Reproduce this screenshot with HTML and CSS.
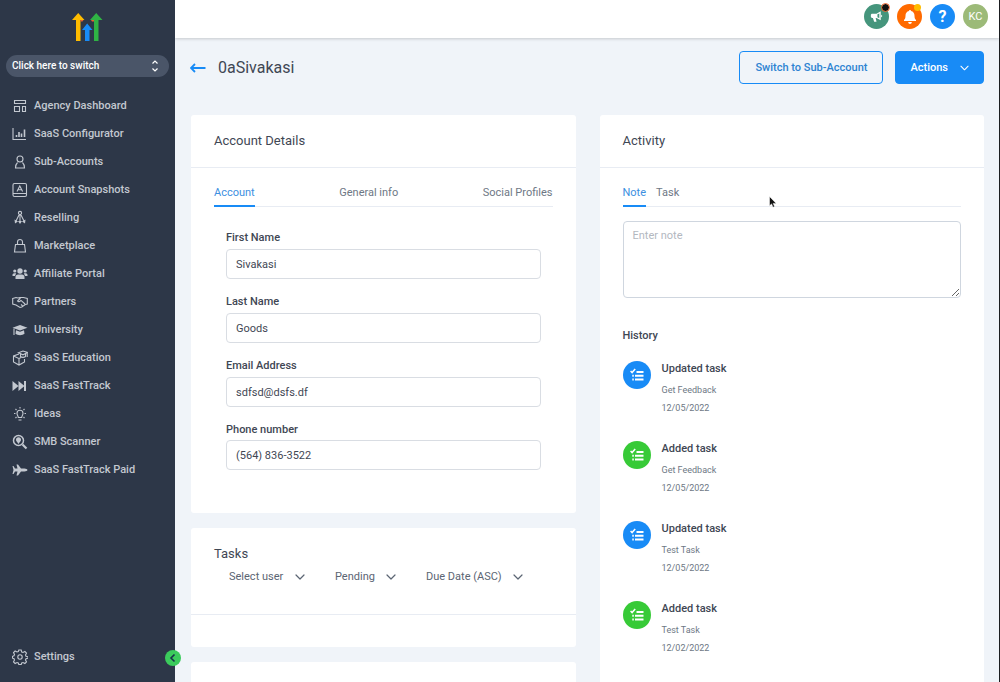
FILE: index.html
```html
<!DOCTYPE html>
<html lang="en">
<head>
  <meta charset="UTF-8">
  <meta name="viewport" content="width=device-width, initial-scale=1.0">
  <title>Account Details</title>
  <link rel="stylesheet" href="styles.css">
</head>
<body>

<!-- Shared icons -->
<svg class="defs" width="0" height="0" aria-hidden="true">
  <symbol id="chevron" viewBox="0 0 10 6"><path d="M1 1l4 4 4-4" fill="none" stroke="currentColor" stroke-width="1.2" stroke-linecap="round" stroke-linejoin="round"/></symbol>
  <symbol id="tasks" viewBox="0 0 14 14">
    <path d="M.6 3l1.500 1.600L5.200 1" fill="none" stroke="currentColor" stroke-width="1.500"/>
    <path d="M6.500 3h7v2h-7zM5 6.700h8.500v2H5zM5 10.400h8.500v2H5zM2.300 6.700h1.500v2H2.300zM2.300 10.400h1.500v2H2.300z" fill="currentColor"/>
  </symbol>
</svg>

<div class="app">
  <aside class="sidebar">
    <svg class="logo" viewBox="0 0 32 30" width="32" height="30">
      <path d="M4 29V8H0l6.200-7 6.300 7H8.500v21z" fill="#ffbc00"/>
      <path d="M22 29V8h-4l6.200-7 6.300 7h-4v21z" fill="#2fb344"/>
      <path d="M13 29V18h-3l5.200-6.500 5.300 6.500h-3v11z" fill="#188bf6"/>
      <path d="M8.500 8h3l-1 1.500h-2zM19 8h3v1.500h-2z" fill="#e8632d"/>
    </svg>

    <button class="switcher">
      <span>Click here to switch</span>
      <svg viewBox="0 0 8 12" width="8" height="12"><path d="M1.500 3.500L4 1l2.500 2.500M1.500 8.500L4 11l2.500-2.500" fill="none" stroke="currentColor" stroke-width="1.200"/></svg>
    </button>

    <nav class="nav">
      <a href="#"><svg viewBox="0 0 16 16"><path d="M2.500 2.500h11v3h-11zM2.500 8.500h5v5h-5zM10.500 8.500h3v5h-3z"/></svg>Agency Dashboard</a>
      <a href="#"><svg viewBox="0 0 16 16"><path d="M1 2v11.500h13"/><path d="M4.500 11V9M7 11V6M9.500 11V7.500M12.500 11V3.500" stroke-width="1.600"/></svg>SaaS Configurator</a>
      <a href="#"><svg viewBox="0 0 16 16"><circle cx="8" cy="5" r="3"/><path d="M5.500 8.500C4.500 9.500 3.500 11 3.500 14h9c0-3-1-4.500-2-5.500"/></svg>Sub-Accounts</a>
      <a href="#"><svg viewBox="0 0 16 16"><rect x="1" y="1.500" width="13.500" height="13" rx="1.500"/><path d="M1 11.500h13.500M5 9.500l2.800-5.500 2.800 5.500M6 7.800h3.600"/></svg>Account Snapshots</a>
      <a href="#"><svg viewBox="0 0 16 16"><circle cx="8" cy="3" r="1.600"/><path d="M8 4.500V12M7 5L4 11M9 5l3 6"/><path class="solid" d="M8 14l-2-3h4zM3 13.500l-.5-4 3.500 2zM13 13.500l.5-4-3.500 2z"/></svg>Reselling</a>
      <a href="#"><svg viewBox="0 0 16 16"><path d="M3.500 6.500h9l1 7.500h-11zM5.500 6.500V4a2.500 2.500 0 0 1 5 0v2.500"/></svg>Marketplace</a>
      <a href="#"><svg viewBox="0 0 16 16"><g class="solid"><circle cx="8" cy="5" r="2.700"/><circle cx="2.800" cy="5" r="1.600"/><circle cx="13.200" cy="5" r="1.600"/><path d="M3.500 13v-2c0-1.500 1.200-2.500 2.500-2.500h4c1.300 0 2.500 1 2.500 2.500v2zM.5 10V9c0-1 .8-1.700 1.700-1.700h2L3 10zM15.500 10V9c0-1-.8-1.700-1.700-1.700h-2L13 10z"/></g></svg>Affiliate Portal</a>
      <a href="#"><svg viewBox="0 0 16 16"><path d="M.7 4.500L4 3.500l2 .5 2-.5 3.500 0 3.800 1v5.500l-2 .5-3.500 2.500-1.800.5L4 11 .7 10zM8.500 4L5.500 7c1 1.200 2.300.6 3.500-.6L13 10M9 10.500l1.500 1.200"/></svg>Partners</a>
      <a href="#"><svg viewBox="0 0 16 16"><path class="solid" d="M8 3l7.500 2.700L8 8.500.5 5.700z"/><path class="solid" d="M4 8.300l4 1.500 4-1.500.5 3.500c-2 1.800-7 1.800-9 0z"/><path d="M2 6.500V13"/></svg>University</a>
      <a href="#"><svg viewBox="0 0 16 16"><path d="M7 4L1.500 6v6L7 15l5.500-3V9M1.500 6L7 8.500V15M7 8.500L9 7.500M6.500 2.800l4.500-1.800 4.500 1.500L11 4.800zM8.500 4v2.500c1.500 1 3.500 1 5 0V3.500M15.200 3v4"/></svg>SaaS Education</a>
      <a href="#"><svg viewBox="0 0 16 16"><path class="solid" d="M.5 3l6 5-6 5zM6.500 3l6 5-6 5zM12 3h2v10h-2z"/></svg>SaaS FastTrack</a>
      <a href="#"><svg viewBox="0 0 16 16"><path d="M6.300 11.500C6.300 10 5 9.300 5 7.300a3 3 0 0 1 6 0c0 2-1.300 2.700-1.300 4.200zM6.500 14h3M8 1v1.500M2 7.500h1.500M12.500 7.500H14M3.500 3l1 1M12.500 3l-1 1M3.500 12l1-1M12.500 12l-1-1"/></svg>Ideas</a>
      <a href="#"><svg viewBox="0 0 16 16"><circle cx="6.500" cy="6.500" r="5" stroke-width="1.500"/><path d="M10.500 10.500L14.500 14.500" stroke-width="2.200"/><path class="solid" d="M6.500 10C5 8 4 7 4 5.800a2.500 2.500 0 0 1 5 0C9 7 8 8 6.500 10z"/></svg>SMB Scanner</a>
      <a href="#"><svg viewBox="0 0 16 16"><path class="solid" d="M.5 4h1l1.500 2.500h2.500L4.500 2.500H6l3 4h3.500c1.500 0 3 .8 3 1.500s-1.500 1.500-3 1.500H9l-3 4H4.500l1-4H3L1.500 12h-1L1.500 8z"/></svg>SaaS FastTrack Paid</a>
    </nav>

    <nav class="nav nav-bottom">
      <a href="#"><svg viewBox="0 0 16 16"><circle cx="8" cy="8" r="2.200"/><path d="M6.800 1h2.400l.5 2 1.300.5 1.900-1 1.600 1.600-1 1.900.5 1.300 2 .5v1.400l-2 .5-.5 1.300 1 1.900-1.600 1.600-1.900-1-1.300.5-.5 1.500H6.800l-.5-1.500-1.300-.5-1.900 1-1.600-1.600 1-1.900-.5-1.300-1.500-.5V7.300l1.500-.5.500-1.300-1-1.900 1.600-1.600 1.900 1 1.300-.5z"/></svg>Settings</a>
    </nav>

    <button class="collapse" aria-label="Collapse sidebar">
      <svg viewBox="0 0 10 10" width="10" height="10"><path d="M6.500 1.500L3 5l3.500 3.500" fill="none" stroke="currentColor" stroke-width="1.600"/></svg>
    </button>
  </aside>

  <div class="main">
    <header class="topbar">
      <button class="round teal" aria-label="Announcements">
        <svg viewBox="0 0 16 16" width="15" height="15"><path d="M12.500 2.500v9.500L8 9.500H3.500c-1 0-1.500-.7-1.500-1.500V6.500C2 5.700 2.500 5 3.500 5H8z" fill="#fff"/><path d="M9 5.700l2-1v5.200l-2-1z" fill="#45957c"/><path d="M4 9h3l1 4.500H5.500zM13 6c1.500.3 1.500 2.500 0 2.800z" fill="#fff"/></svg>
        <span class="dot dark"></span>
      </button>
      <button class="round orange" aria-label="Notifications">
        <svg viewBox="0 0 16 16" width="16" height="16"><path d="M8 1c.7 0 1 .5 1 1.100 2.300.5 3.500 2.300 3.500 4.700 0 2.400.6 3.300 1.500 4.200v1H2v-1c.9-.9 1.500-1.800 1.500-4.200C3.500 4.400 4.700 2.600 7 2.100 7 1.500 7.300 1 8 1zM6.200 13h3.600c0 1.200-.8 2-1.800 2s-1.800-.8-1.800-2z" fill="#fff"/></svg>
        <span class="dot yellow"></span>
      </button>
      <button class="round blue" aria-label="Help">?</button>
      <button class="round avatar">KC</button>
    </header>

    <div class="page-head">
      <a href="#" class="back" aria-label="Back">
        <svg viewBox="0 0 16 10" width="16" height="10"><path d="M15.500 5H1.500M5 1L1 5l4 4" fill="none" stroke="currentColor" stroke-width="1.800"/></svg>
      </a>
      <h1>0aSivakasi</h1>
      <button class="btn btn-outline">Switch to Sub-Account</button>
      <button class="btn btn-primary">Actions <svg width="9" height="6"><use href="#chevron"/></svg></button>
    </div>

    <div class="columns">
      <div class="column">
        <section class="card details">
          <h2 class="card-title">Account Details</h2>
          <div class="tabs spread">
            <button class="tab active">Account</button>
            <button class="tab">General info</button>
            <button class="tab">Social Profiles</button>
          </div>
          <form class="fields">
            <div class="field">
              <label for="first-name">First Name</label>
              <input type="text" id="first-name" value="Sivakasi">
            </div>
            <div class="field">
              <label for="last-name">Last Name</label>
              <input type="text" id="last-name" value="Goods">
            </div>
            <div class="field">
              <label for="email">Email Address</label>
              <input type="email" id="email" value="sdfsd@dsfs.df">
            </div>
            <div class="field tight">
              <label for="phone">Phone number</label>
              <input type="tel" id="phone" value="(564) 836-3522">
            </div>
          </form>
        </section>

        <section class="card">
          <div class="tasks-head">
            <h2>Tasks</h2>
            <div class="filters">
              <div class="filter"><select aria-label="User"><option>Select user</option></select><svg width="10" height="6"><use href="#chevron"/></svg></div>
              <div class="filter"><select aria-label="Status"><option>Pending</option></select><svg width="10" height="6"><use href="#chevron"/></svg></div>
              <div class="filter"><select aria-label="Sort"><option>Due Date (ASC)</option></select><svg width="10" height="6"><use href="#chevron"/></svg></div>
            </div>
          </div>
          <div class="tasks-body"></div>
        </section>

        <section class="card next"></section>
      </div>

      <section class="card column">
        <h2 class="card-title">Activity</h2>
        <div class="tabs">
          <button class="tab active">Note</button>
          <button class="tab">Task</button>
        </div>
        <div class="note">
          <textarea placeholder="Enter note" aria-label="Note"></textarea>
        </div>
        <h3>History</h3>
        <ul class="history">
          <li>
            <span class="badge updated"><svg width="14" height="14"><use href="#tasks"/></svg></span>
            <div><h4>Updated task</h4><p>Get Feedback</p><p>12/05/2022</p></div>
          </li>
          <li>
            <span class="badge added"><svg width="14" height="14"><use href="#tasks"/></svg></span>
            <div><h4>Added task</h4><p>Get Feedback</p><p>12/05/2022</p></div>
          </li>
          <li>
            <span class="badge updated"><svg width="14" height="14"><use href="#tasks"/></svg></span>
            <div><h4>Updated task</h4><p>Test Task</p><p>12/05/2022</p></div>
          </li>
          <li>
            <span class="badge added"><svg width="14" height="14"><use href="#tasks"/></svg></span>
            <div><h4>Added task</h4><p>Test Task</p><p>12/02/2022</p></div>
          </li>
        </ul>
      </section>
    </div>
  </div>
</div>

<svg class="cursor" viewBox="0 0 8 12" width="8" height="12"><path d="M.5.5v9.300l2.100-1.900 1.400 3.400 1.600-.7-1.400-3.200h3z" fill="#111" stroke="#fff" stroke-width=".5"/></svg>

</body>
</html>
```
FILE: styles.css
```css
:root {
  --sidebar: #2d3748;
  --page-bg: #f0f4f9;
  --blue: #188bf6;
  --green: #37ca37;
  --text: #3f4754;
  --muted: #6e7885;
  --line: #e8ecf3;
}

* {
  box-sizing: border-box;
}

body {
  margin: 0;
  font-family: Roboto, sans-serif;
  font-size: 11px;
  line-height: 16px;
  color: var(--text);
  overflow: hidden;
}

h1, h2, h3, h4, p, ul {
  margin: 0;
  padding: 0;
}

button, input, select, textarea {
  font: inherit;
  color: inherit;
}

button {
  border: none;
  background: none;
  padding: 0;
  cursor: pointer;
}

.defs {
  position: absolute;
}

.app {
  display: flex;
  height: 100vh;
  border-right: 1px solid #1b1d20;
}

/* Sidebar */
.sidebar {
  position: relative;
  display: flex;
  flex-direction: column;
  flex: 0 0 175px;
  padding: 12px 6px 11px;
  background: var(--sidebar);
}

.logo {
  align-self: center;
  flex-shrink: 0;
}

.switcher {
  display: flex;
  justify-content: space-between;
  align-items: center;
  flex-shrink: 0;
  height: 22px;
  margin: 13px 0 15px;
  padding: 0 10px 0 6px;
  border-radius: 11px;
  background: #4a5568;
  color: #fff;
  font-size: 10px;
  font-weight: 500;
}

.nav a {
  display: flex;
  align-items: center;
  gap: 6px;
  height: 28px;
  padding-left: 6px;
  color: #c3c8d0;
  font-weight: 500;
  text-decoration: none;
}

.nav svg {
  width: 16px;
  height: 16px;
  fill: none;
  stroke: currentColor;
  stroke-width: 1.1;
}

.nav .solid {
  fill: currentColor;
  stroke: none;
}

.nav-bottom {
  margin-top: auto;
}

.collapse {
  position: absolute;
  right: -6px;
  bottom: 16px;
  display: flex;
  align-items: center;
  justify-content: center;
  width: 16px;
  height: 16px;
  border-radius: 50%;
  background: #3bcb5c;
  color: #17324a;
}

/* Top bar */
.main {
  flex: 1;
  min-width: 0;
  overflow: hidden;
  background: var(--page-bg);
}

.topbar {
  display: flex;
  justify-content: flex-end;
  gap: 8px;
  padding: 4px 11px 9px;
  background: #fff;
  box-shadow: 0 1px 3px rgba(0, 0, 0, 0.18);
}

.round {
  position: relative;
  display: flex;
  align-items: center;
  justify-content: center;
  width: 25px;
  height: 25px;
  border-radius: 50%;
  color: #fff;
}

.teal {
  background: #45957c;
}

.orange {
  background: #ff6a00;
}

.blue {
  background: var(--blue);
  font-size: 16px;
  font-weight: 700;
}

.avatar {
  background: #9cba78;
}

.dot {
  position: absolute;
  top: 0;
  right: 1px;
  width: 7px;
  height: 7px;
  border-radius: 50%;
}

.dot.dark {
  right: 0;
  background: #111;
  outline: 1px solid #e8622c;
}

.dot.yellow {
  background: #ffbc00;
}

/* Page header */
.page-head {
  display: flex;
  align-items: center;
  gap: 12px;
  padding: 13px 15px 31px;
}

.back {
  display: flex;
  color: var(--blue);
}

.page-head h1 {
  flex: 1;
  font-size: 16px;
  font-weight: 400;
}

.btn {
  height: 33px;
  padding: 0 15px;
  border: 1px solid var(--blue);
  border-radius: 4px;
  font-weight: 500;
}

.btn-outline {
  color: #2d83d2;
}

.btn-primary {
  display: flex;
  align-items: center;
  gap: 12px;
  padding: 0 14px;
  background: var(--blue);
  color: #fff;
}

/* Cards */
.columns {
  display: flex;
  gap: 24px;
  padding: 0 15px 0 16px;
}

.column {
  flex: 1;
  min-width: 0;
}

.card {
  border-radius: 3px;
  background: #fff;
}

.column > .card {
  margin-bottom: 15px;
}

.card-title {
  padding: 18px 23px;
  border-bottom: 1px solid var(--line);
}

h2 {
  font-size: 13px;
  font-weight: 400;
}

.tabs {
  display: flex;
  gap: 10px;
  margin: 15px 23px 0;
  border-bottom: 1px solid var(--line);
}

.tabs.spread {
  justify-content: space-between;
}

.tab {
  padding: 2px 0 4px;
  margin-bottom: -1px;
  border-bottom: 2px solid transparent;
  color: var(--muted);
}

.tab.active {
  border-color: var(--blue);
  color: #3c8fdf;
}

.details {
  padding-bottom: 43px;
}

.fields {
  display: flex;
  flex-direction: column;
  gap: 15px;
  padding: 23px 35px 0;
}

.field {
  display: flex;
  flex-direction: column;
  gap: 3px;
}

.field.tight {
  gap: 2px;
}

.field label {
  font-weight: 500;
}

.field input {
  width: 100%;
  height: 30px;
  padding: 0 9px;
  border: 1px solid #d9dde3;
  border-radius: 4px;
}

.tasks-head {
  padding: 18px 23px 29px;
  border-bottom: 1px solid var(--line);
}

.filters {
  display: flex;
  gap: 30px;
  padding: 7px 15px 0;
}

.filter {
  display: flex;
  align-items: center;
  color: #5b6573;
}

.filter select {
  appearance: none;
  padding: 0 21px 0 0;
  border: none;
  background: none;
}

.filter svg {
  margin-left: -10px;
  pointer-events: none;
}

.tasks-body {
  height: 32px;
}

.next {
  height: 120px;
}

/* Activity */
.note {
  display: flex;
  padding: 14px 23px 0;
}

.note textarea {
  width: 100%;
  height: 77px;
  padding: 6px 9px;
  border: 1px solid #cfd6df;
  border-radius: 4px;
}

.note textarea::placeholder {
  color: #b3b8bf;
}

h3 {
  padding: 30px 23px 0;
  font-size: 11px;
  font-weight: 500;
}

.history {
  display: flex;
  flex-direction: column;
  gap: 24px;
  padding: 17px 23px;
  list-style: none;
}

.history li {
  display: flex;
  gap: 11px;
}

.badge {
  display: flex;
  align-items: center;
  justify-content: center;
  width: 28px;
  height: 28px;
  border-radius: 50%;
  color: #fff;
}

.updated {
  background: var(--blue);
}

.added {
  background: var(--green);
}

.history h4 {
  margin-bottom: 4px;
  font-size: 11px;
  font-weight: 500;
}

.history p {
  color: var(--muted);
  font-size: 9px;
  line-height: 18px;
}

.cursor {
  position: absolute;
  left: 769px;
  top: 196px;
}
```
